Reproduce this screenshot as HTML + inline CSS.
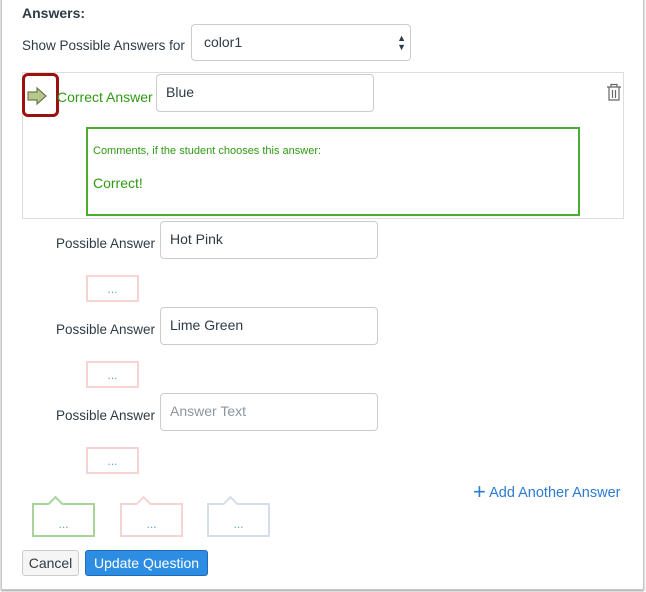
<!DOCTYPE html>
<html><head><style>
body{margin:0;width:646px;height:592px;background:#fff;font-family:"Liberation Sans",sans-serif;position:relative;overflow:hidden}
.a{position:absolute}
.outer{left:1px;top:-2px;width:641px;height:590px;border:1px solid #c8c8c8;box-shadow:0 1px 2px #999}
.inp{position:absolute;border:1px solid #c7cdd1;border-radius:4px;background:#fff;font-size:14px;color:#2d3b45;box-sizing:border-box;padding-left:9px;line-height:35px}
.lbl{position:absolute;font-size:13.5px;color:#2d3b45}
.pk{position:absolute;width:53px;height:27px;box-sizing:border-box;border:2px solid #f7d4d4;color:#5aa7e8;text-align:center;font-size:12px;line-height:24px}
.bub{position:absolute;width:63px;height:34px;box-sizing:border-box;border:2px solid;color:#5aa7e8;text-align:center;font-size:12px;line-height:38px}
.bub:before{content:"";position:absolute;left:16px;top:-7px;width:9px;height:9px;background:#fff;border-left:2px solid;border-top:2px solid;border-color:inherit;transform:rotate(45deg)}
</style></head><body>
<div class="a outer"></div>
<div class="a" style="left:22px;top:5px;font-size:14px;font-weight:bold;color:#2d3b45">Answers:</div>
<div class="lbl" style="left:22px;top:38px">Show Possible Answers for</div>
<div class="inp" style="left:191px;top:24px;width:220px;height:37px;line-height:34px;padding-left:12px">color1<span class="a" style="right:4px;top:0;font-size:9px;line-height:9px;top:9px">▲<br>▼</span></div>
<div class="a" style="left:22px;top:72px;width:600px;height:145px;border:1px solid #ddd"></div>
<div class="a" style="left:22px;top:73px;width:31px;height:38px;border:3px solid #9c1010;border-radius:6px"></div>
<svg class="a" style="left:26px;top:86px" width="24" height="20" viewBox="0 0 24 20"><path d="M2 6h9V2l9 8-9 8v-4H2z" fill="#b7c98a" stroke="#6e7a4e" stroke-width="1.2"/></svg>
<div class="lbl" style="left:57px;top:89px;color:#2e9a12;font-size:14px">Correct Answer</div>
<div class="inp" style="left:156px;top:74px;width:218px;height:38px">Blue</div>
<svg class="a" style="left:606px;top:83px" width="16" height="18" viewBox="0 0 16 18"><path d="M1 4h14M5 4V1.5h6V4M3 4v13h10V4M6.5 7v8M9.5 7v8" fill="none" stroke="#666" stroke-width="1.2"/></svg>
<div class="a" style="left:86px;top:127px;width:494px;height:89px;box-sizing:border-box;border:2px solid #49ad33"></div>
<div class="a" style="left:93px;top:145px;font-size:11px;color:#2e9a12">Comments, if the student chooses this answer:</div>
<div class="a" style="left:93px;top:175px;font-size:14px;color:#2e9a12">Correct!</div>
<div class="lbl" style="left:56px;top:236px">Possible Answer</div>
<div class="inp" style="left:160px;top:221px;width:218px;height:38px">Hot Pink</div>
<div class="pk" style="left:86px;top:275px">...</div>
<div class="lbl" style="left:56px;top:322px">Possible Answer</div>
<div class="inp" style="left:160px;top:307px;width:218px;height:38px">Lime Green</div>
<div class="pk" style="left:86px;top:361px">...</div>
<div class="lbl" style="left:56px;top:408px">Possible Answer</div>
<div class="inp" style="left:160px;top:393px;width:218px;height:38px;color:#8b969e">Answer Text</div>
<div class="pk" style="left:86px;top:447px">...</div>
<div class="a" style="left:473px;top:479px;font-size:14.5px;color:#2d7bd0"><span style="font-size:22px;font-weight:300;vertical-align:-2px">+</span> Add Another Answer</div>
<div class="bub" style="left:32px;top:503px;border-color:#a8d49c">...</div>
<div class="bub" style="left:120px;top:503px;border-color:#f7d4d4">...</div>
<div class="bub" style="left:207px;top:503px;border-color:#d5dcea">...</div>
<div class="a" style="left:22px;top:550px;width:57px;height:26px;box-sizing:border-box;border:1px solid #c7cdd1;border-radius:3px;background:#f5f5f5;font-size:14px;color:#2d3b45;text-align:center;line-height:24px">Cancel</div>
<div class="a" style="left:85px;top:550px;width:123px;height:26px;box-sizing:border-box;border:1px solid #1e6bb8;border-radius:3px;background:#2d8de3;font-size:14px;color:#fff;text-align:center;line-height:24px">Update Question</div>
</body></html>
